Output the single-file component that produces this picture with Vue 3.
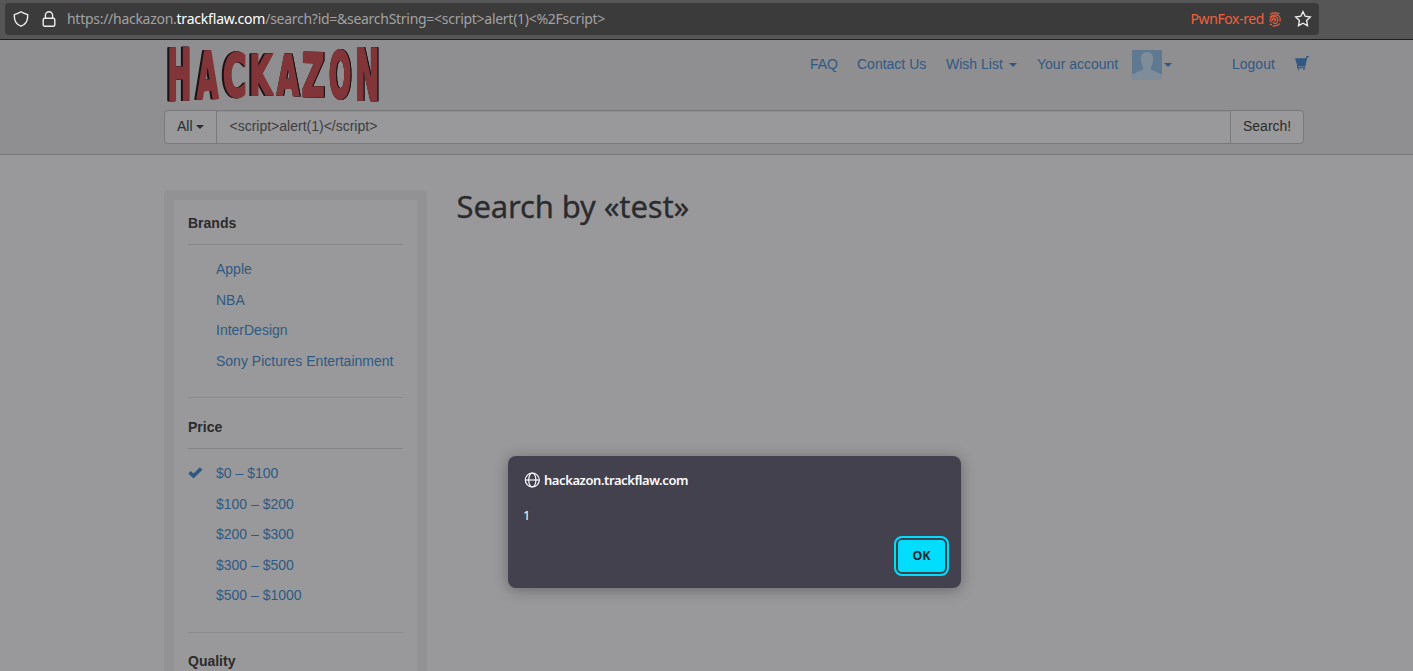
<script setup>
// Each logo letter is stretched to its own box: left edge, top, width, bottom.
const glyph = {
  H: [7, 49.7], A: [0.3, 58], C: [3.8, 47.5], K: [7, 54], Z: [4.2, 47], O: [3.8, 57], N: [7, 49.7],
}
const fit = ([c, x, top, w, bottom, skew]) => {
  const [bearing, ink] = glyph[c]
  const sx = (w - 2.4) / ink
  const sy = (bottom - top - 2.4) / 55.4
  return { c, m: `translate(${x + 1.2 - bearing * sx} ${bottom - 1.2}) scale(${sx} ${sy}) skewY(${skew})` }
}
const halves = [
  { side: 'left', letters: [['H', 168.8, 47.6, 21.5, 101, -0.5], ['A', 196, 51, 23.5, 99.5, -1], ['C', 223.5, 52.6, 22.5, 97.5, -0.5], ['K', 251, 54, 23, 95.8, -0.3]].map(fit) },
  { side: 'right', letters: [['A', 276, 53.5, 24, 95.5, 1], ['Z', 302.5, 52, 21.5, 97, 0.5], ['O', 329, 50, 22, 98.500, 0.5], ['N', 356.5, 47.300, 21.5, 100.5, 0.5]].map(fit) },
]
const groups = [
  { title: 'Brands', items: ['Apple', 'NBA', 'InterDesign', 'Sony Pictures Entertainment'] },
  { title: 'Price', checked: 0, items: ['$0 – $100', '$100 – $200', '$200 – $300', '$300 – $500', '$500 – $1000'] },
  { title: 'Quality', items: [] },
]
</script>

<template>
  <div class="window">
    <div class="toolbar">
      <div class="urlbar">
        <svg class="shield" width="16" height="16" viewBox="0 0 16 16"><path d="M8 .8 C6.3 2 4.2 2.7 1.4 3.600 V6.2 C1.5 10.4 4 13.7 8 15.2 C12 13.7 14.5 10.4 14.6 6.2 V3.600 C11.8 2.7 9.7 2 8 .8Z" /></svg>
        <svg class="lock" width="14" height="16" viewBox="0 0 14 16"><rect x="1.2" y="7.2" width="11.6" height="8" rx="1.5" /><path d="M3.4 7 V4.4 A3.6 3.6 0 0 1 10.6 4.4 V7" /></svg>
        <span class="url">https://hackazon.<b>trackflaw.com</b>/search?id=&amp;searchString=&lt;script&gt;alert(1)&lt;%2Fscript&gt;</span>
        <span class="container-name">PwnFox-red</span>
        <svg class="print" width="12" height="15" viewBox="0 0 12 15"><path d="M1 2.200 Q5 -.2 10.500 1.800 M.8 5.200 Q5 1.200 10 4 Q11.800 6 10.900 9.500 M.8 9.500 Q1 5 5 4.500 Q9 4.500 9 8 Q8.800 10 7.500 11 M2.800 10.500 Q2.300 7 5 6.600 Q7.300 6.800 6.800 8.500 Q5.800 9.700 5 8.400 M.8 12 Q2 12.800 3 12.500 M4 10.500 Q6 12.300 8 11.600 M3.500 14 Q7.500 14.800 11 11.600" /></svg>
        <svg class="star" width="18" height="18" viewBox="0 0 18 18"><path d="M9 1.7 L11.2 6.2 L16.3 7 L12.6 10.5 L13.5 15.6 L9 13.2 L4.5 15.6 L5.4 10.5 L1.7 7 L6.8 6.2Z" /></svg>
      </div>
    </div>
    <header class="header">
      <div class="top">
        <svg class="logo" width="220" height="62" viewBox="164 44 220 62">
          <g v-for="h in halves" :key="h.side" :class="h.side">
            <text v-for="(l, i) in h.letters" :key="i" :transform="l.m">{{ l.c }}</text>
          </g>
        </svg>
        <nav class="nav">
          <a class="faq">FAQ</a>
          <a class="contact">Contact Us</a>
          <a class="wish">Wish List <i class="caret"></i></a>
          <a class="account">Your account</a>
          <a class="avatar"><svg width="30" height="30" viewBox="0 0 30 30"><rect width="30" height="30" fill="#5f7990" /><path d="M0 30V24.500L9 20.500Q12 19.500 11 17Q9 14 9 10Q8.500 2 15 2Q21.500 2 21 10Q21 14 19 17Q18 19.500 21 20.500L30 24.500V30Z" fill="#7f8c9a" /></svg><i class="caret"></i></a>
          <a class="logout">Logout</a>
          <svg class="cart" width="14" height="15" viewBox="0 0 14 15"><path d="M0 2.200H10.600L11.500 0H13.900V1.200H12.400L10.300 10.600H3V11.200H10.200V12.200H2V10L2.200 9.600Z" /><circle cx="3.600" cy="12.900" r=".9" /><circle cx="9" cy="12.900" r=".9" /></svg>
        </nav>
      </div>
      <div class="search">
        <span class="all">All <i class="caret"></i></span>
        <span class="field">&lt;script&gt;alert(1)&lt;/script&gt;</span>
        <span class="go">Search!</span>
      </div>
    </header>
    <main class="main">
      <aside class="side">
        <div class="panel">
          <section v-for="g in groups" :key="g.title" class="group">
            <h4>{{ g.title }}</h4>
            <ul>
              <li v-for="(t, i) in g.items" :key="t">
                <svg v-if="g.checked === i" class="check" width="15" height="12" viewBox="0 0 15 12"><path d="M.3 6.500 L2.800 4 L5.500 6.600 L11.800 .3 L14.500 2.800 L5.500 11.600Z" /></svg>
                <a>{{ t }}</a>
              </li>
            </ul>
          </section>
        </div>
      </aside>
      <h1>Search by «test»</h1>
    </main>
    <div class="dialog">
      <div class="origin">
        <svg width="16" height="16" viewBox="0 0 16 16"><circle cx="8.300" cy="8" r="7" /><ellipse cx="8.300" cy="8" rx="3.600" ry="7" /><path d="M1.300 8H15.300" /></svg>
        <b>hackazon.trackflaw.com</b>
      </div>
      <p>1</p>
      <button>OK</button>
    </div>
  </div>
</template>

<style>
body { margin: 0; overflow: hidden; }
</style>
<style scoped>
* { box-sizing: border-box; }
.window { position: relative; width: 1413px; height: 671px; overflow: hidden; background: #99999b; font: 14px/20px "Liberation Sans", Arial, sans-serif; color: #2b2b2e; }
.toolbar { height: 40px; background: #565656; border-bottom: 1px solid #202020; padding: 3px 0 0 5px; }
.urlbar { width: 1314px; height: 32px; border-radius: 4px; background: #3b3b3b; display: flex; align-items: center; padding: 0 7px 0 8px; font: 14px/20px "Noto Sans", sans-serif; color: #a2a2a2; }
.urlbar svg { fill: none; stroke: #ededed; stroke-width: 1.4; flex: none; }
.lock { margin-left: 13px; }
.url { margin-left: 11px; white-space: nowrap; letter-spacing: -.28px; }
.url b { font-weight: 400; color: #fff; letter-spacing: -.2px; }
.container-name { color: #f0603e; margin-left: auto; letter-spacing: -.4px; }
.urlbar .print { stroke: #f0603e; stroke-width: 1.1; margin-left: 5px; }
.star { margin-left: 13px; }
.header { height: 115px; background: #8f8f91; border-bottom: 1px solid #79797b; }
.top { height: 70px; display: flex; padding-left: 164px; }
.logo { margin-top: 4px; flex: none; overflow: visible; }
.logo text { font: 700 76px/1 "DejaVu Sans", sans-serif; fill: #823538; stroke: #823538; stroke-width: 2.4px; vector-effect: non-scaling-stroke; }
.left { filter: drop-shadow(-1px .8px 0 #171315) drop-shadow(-.4px .4px 0 #171315); }
.right { filter: drop-shadow(1px .8px 0 #171315) drop-shadow(.4px .4px 0 #171315); }
.nav { display: flex; margin-left: 426px; padding-top: 14px; white-space: nowrap; color: #2f5982; flex: none; }
.nav a { flex: none; }
.faq { width: 47px; }
.contact { width: 89px; }
.wish { width: 91px; }
.account { width: 95px; }
.avatar { width: 100px; display: flex; margin-top: -4px; height: 30px; align-items: center; }
.avatar .caret { margin-left: 2px; }
.logout { width: 63px; }
.cart { fill: #2f5982; margin-top: 2px; }
.caret { display: inline-block; width: 0; height: 0; border: 4px solid transparent; border-top-color: currentColor; border-bottom: 0; vertical-align: middle; margin-left: 2px; }
.all .caret { margin-left: 0; }
.search { width: 1140px; height: 34px; margin-left: 164px; border: 1px solid #7a7a7c; border-radius: 4px; background: #99999b; display: flex; line-height: 31px; }
.all { width: 52px; padding-left: 12px; border-right: 1px solid #7a7a7c; white-space: nowrap; }
.field { flex: 1; padding-left: 12.5px; color: #3d3d42; box-shadow: inset 0 1px 1px #8c8c8e; }
.go { width: 73px; border-left: 1px solid #7a7a7c; padding-left: 12px; }
.main { display: flex; padding: 35px 0 0 164px; align-items: flex-start; }
.side { width: 263px; height: 540px; border: 10px solid #929294; border-radius: 5px; flex: none; }
.panel { padding: 13px 14px 0 14px; }
.group { border-bottom: 1px solid #8c8c8e; height: 185px; margin-bottom: 19px; }
.group:nth-child(2) { height: 216px; margin-bottom: 18px; }
h4 { margin: 0; font-size: 14px; line-height: 20px; padding-bottom: 11px; border-bottom: 1px solid #858587; }
ul { list-style: none; margin: 14px 0 0; padding: 0; color: #2f5982; }
li { height: 30.6px; padding-left: 28px; position: relative; white-space: nowrap; }
.check { position: absolute; left: 0; top: 4px; fill: #2f5982; }
h1 { margin: -1px 0 0 29.5px; font: 400 31px/34px "Noto Sans", sans-serif; letter-spacing: -.13px; -webkit-text-stroke: .3px #2b2b2e; }
.dialog { position: absolute; left: 508px; top: 456px; width: 453px; height: 132px; border-radius: 8px; background: #42414d; box-shadow: 0 2px 14px rgba(20, 20, 25, .35); padding: 15px 16px 16px; color: #fbfbfe; font: 13px/18px "Noto Sans", sans-serif; }
.origin { display: flex; align-items: center; height: 18px; gap: 4px; }
.origin b { font-weight: 600; letter-spacing: -.42px; }
.origin svg { fill: none; stroke: #fbfbfe; stroke-width: 1.200; }
.dialog p { margin: 17px 0 0 -1px; }
.dialog button { display: block; margin: 16px 0 0 374px; width: 47px; height: 32px; border: 0; border-radius: 4px; background: #00ddff; outline: 2px solid #00ddff; outline-offset: 2px; color: #2b2a33; font: 700 12.5px/32px "Noto Sans", sans-serif; padding: 0; }
</style>
